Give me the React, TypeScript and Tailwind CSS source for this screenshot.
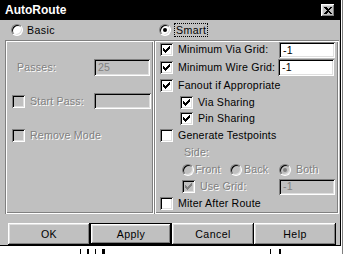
const sunken = 'shadow-[inset_1px_1px_0_#808080,inset_-1px_-1px_0_#fff,inset_2px_2px_0_#000,inset_-2px_-2px_0_#dfdfdf]'
const raised = 'shadow-[inset_-1px_-1px_0_#000,inset_1px_1px_0_#fff,inset_-2px_-2px_0_#808080,inset_2px_2px_0_#dfdfdf]'
const etched = 'shadow-[inset_1px_1px_0_#808080,inset_-1px_-1px_0_#fff,inset_2px_2px_0_#fff,inset_-2px_-2px_0_#808080]'
const dim = 'text-[#808080] [text-shadow:1px_1px_0_#fff]'

// 7x7 win95 check mark, pixel by pixel
const CHECK = [
  [6, 0], [5, 1], [6, 1], [0, 2], [4, 2], [5, 2], [6, 2], [0, 3], [1, 3], [3, 3], [4, 3], [5, 3],
  [0, 4], [1, 4], [2, 4], [3, 4], [4, 4], [1, 5], [2, 5], [3, 5], [2, 6],
]

function Check({ checked, disabled }: { checked?: boolean; disabled?: boolean }) {
  return (
    <div className={`w-[13px] h-[13px] shrink-0 flex items-center justify-center ${sunken} ${disabled ? 'bg-[#c0c0c0]' : 'bg-white'}`}>
      {checked && (
        <svg width="7" height="7" viewBox="0 0 7 7" shapeRendering="crispEdges">
          {CHECK.map(([x, y]) => (
            <rect key={`${x}-${y}`} x={x} y={y} width="1" height="1" fill={disabled ? '#808080' : '#000'} />
          ))}
        </svg>
      )}
    </div>
  )
}

function Radio({ checked, disabled }: { checked?: boolean; disabled?: boolean }) {
  return (
    <div className={`w-[12px] h-[12px] shrink-0 rounded-full border border-t-[#808080] border-l-[#808080] border-b-white border-r-white shadow-[inset_1px_1px_0_#000,inset_-1px_-1px_0_#dfdfdf] flex items-center justify-center ${disabled ? 'bg-[#c0c0c0]' : 'bg-white'}`}>
      {checked && <div className={`w-[4px] h-[4px] rounded-full ${disabled ? 'bg-[#808080]' : 'bg-black'}`} />}
    </div>
  )
}

function Field({ value, disabled, className }: { value?: string; disabled?: boolean; className: string }) {
  return (
    <div className={`${className} ${sunken} shrink-0 flex items-center pl-[4px] ${disabled ? 'bg-[#c0c0c0] text-[#808080]' : 'bg-white text-black'}`}>
      {value}
    </div>
  )
}

function Button({ label, isDefault }: { label: string; isDefault?: boolean }) {
  return (
    <div className={`w-[82px] h-[22px] ${isDefault ? 'border border-black' : ''}`}>
      <div className={`w-full h-full bg-[#c0c0c0] ${raised} flex items-center justify-center tracking-[0.4px]`}>{label}</div>
    </div>
  )
}

export default function App() {
  return (
    <div className="w-[345px] h-[254px] bg-white relative overflow-hidden font-['Liberation_Sans',Arial,sans-serif] text-[10.6px] text-black leading-none whitespace-nowrap">
      <div className="w-[341px] h-[246px] bg-[#c0c0c0] flex flex-col border-r border-b border-black">
        <div className="h-[20px] bg-black flex items-center justify-between pl-[5px] pr-[5px]">
          <span className="text-white font-bold text-[12px]">AutoRoute</span>
          <div className={`w-[14px] h-[13px] bg-[#c0c0c0] ${raised} flex items-center justify-center`}>
            <svg width="8" height="7" viewBox="0 0 8 7" shapeRendering="crispEdges">
              <path d="M0 0h2l2 2 2-2h2L5 3.5 8 7H6L4 5 2 7H0l3-3.5z" fill="#000" />
            </svg>
          </div>
        </div>

        <div className="h-[20px] flex items-center">
          <div className="flex items-center w-[159px] pl-[11px] gap-[4px]">
            <Radio />
            <span className="tracking-[0.4px]">Basic</span>
          </div>
          <div className="flex items-center gap-[3px]">
            <Radio checked />
            <span className="border border-dotted border-black px-[1px] py-[1px] tracking-[0.4px]">Smart</span>
          </div>
        </div>

        <div className="h-[174px] flex pl-[5px] tracking-[0.2px]">
          <div className={`w-[149px] h-full ${etched} flex flex-col pt-[18px]`}>
            <div className="h-[18px] flex items-center pl-[12px]">
              <span className={`w-[77px] ${dim}`}>Passes:</span>
              <Field value="25" disabled className="w-[56px] h-[17px]" />
            </div>
            <div className="h-[16px]" />
            <div className="h-[18px] flex items-center pl-[7px]">
              <Check disabled />
              <span className={`w-[64px] ml-[5px] ${dim}`}>Start Pass:</span>
              <Field disabled className="w-[57px] h-[16px]" />
            </div>
            <div className="h-[16px]" />
            <div className="h-[18px] flex items-center pl-[7px]">
              <Check disabled />
              <span className={`ml-[5px] ${dim}`}>Remove Mode</span>
            </div>
          </div>

          <div className={`w-[185px] h-full ${etched} flex flex-col pl-[6px]`}>
            <div className="h-[18px] flex items-center">
              <Check checked />
              <span className="ml-[5px] w-[101px]">Minimum Via Grid:</span>
              <Field value="-1" className="w-[56px] h-[16px] mt-[2px]" />
            </div>
            <div className="h-[18px] flex items-center">
              <Check checked />
              <span className="ml-[5px] w-[100px]">Minimum Wire Grid:</span>
              <Field value="-1" className="w-[56px] h-[17px]" />
            </div>
            <div className="h-[18px] flex items-center">
              <Check checked />
              <span className="ml-[5px]">Fanout if Appropriate</span>
            </div>
            <div className="h-[16px] flex items-center pl-[20px]">
              <Check checked />
              <span className="ml-[5px]">Via Sharing</span>
            </div>
            <div className="h-[17px] flex items-center pl-[20px]">
              <Check checked />
              <span className="ml-[5px]">Pin Sharing</span>
            </div>
            <div className="h-[16px] flex items-center">
              <Check />
              <span className="ml-[5px]">Generate Testpoints</span>
            </div>
            <div className="h-[18px] flex items-center pl-[24px]">
              <span className={dim}>Side:</span>
            </div>
            <div className="h-[17px] flex items-center pl-[22px]">
              <Radio disabled />
              <span className={`ml-[1px] w-[35px] ${dim}`}>Front</span>
              <Radio disabled />
              <span className={`ml-[2px] w-[35px] ${dim}`}>Back</span>
              <Radio checked disabled />
              <span className={`ml-[5px] ${dim}`}>Both</span>
            </div>
            <div className="h-[17px] flex items-center pl-[22px]">
              <Check checked disabled />
              <span className={`ml-[5px] w-[79px] ${dim}`}>Use Grid:</span>
              <Field value="-1" disabled className="w-[56px] h-[16px]" />
            </div>
            <div className="h-[17px] flex items-center">
              <Check />
              <span className="ml-[5px]">Miter After Route</span>
            </div>
          </div>
        </div>

        <div className="flex pl-[8px] mt-[9px]">
          <Button label="OK" />
          <Button label="Apply" isDefault />
          <Button label="Cancel" />
          <Button label="Help" />
        </div>
      </div>
      <div className="absolute left-[342px] top-0 w-[1px] h-[254px] bg-[#808080]" />
      <div className="absolute left-[80px] top-[249px] flex gap-[6px]">
        <div className="w-[1px] h-[5px] bg-black" />
        <div className="w-[2px] h-[5px] bg-black" />
        <div className="w-[1px] h-[5px] bg-black" />
        <div className="w-[3px] h-[5px] bg-black" />
      </div>
      <div className="absolute left-[270px] top-[249px] flex gap-[8px]">
        <div className="w-[1px] h-[5px] bg-black" />
        <div className="w-[2px] h-[5px] bg-black" />
      </div>
    </div>
  )
}
